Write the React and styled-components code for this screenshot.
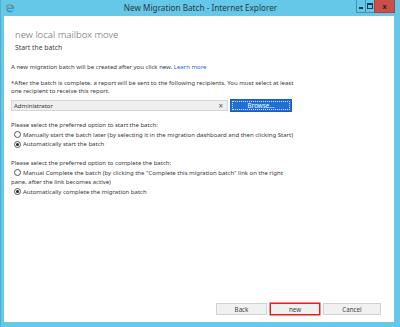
import styled, { createGlobalStyle } from 'styled-components';

const GlobalStyle = createGlobalStyle`
  html, body {
    margin: 0;
    padding: 0;
    overflow: hidden;
  }
  body {
    font-family: 'Noto Sans', 'Open Sans', sans-serif;
  }
`;

const Frame = styled.div`
  width: 400px;
  height: 327px;
  box-sizing: border-box;
  background: #65c8e8;
  border-left: 1px solid #4eafd6;
  display: flex;
  flex-direction: column;
`;

const TitleBar = styled.div`
  height: 16px;
  display: flex;
  align-items: flex-start;
  position: relative;
`;

const AppIcon = styled.svg`
  margin: 3px 0 0 4px;
  width: 10px;
  height: 10px;
`;

const TitleText = styled.div`
  position: absolute;
  left: 0;
  right: 0;
  top: 2px;
  text-align: center;
  font-size: 8.2px;
  line-height: 11px;
  color: #2b3a44;
  pointer-events: none;
`;

const Controls = styled.div`
  margin-left: auto;
  margin-right: 5px;
  display: flex;
  height: 13px;
`;

const CtrlButton = styled.div`
  width: ${({ wide }) => (wide ? '21px' : '10px')};
  height: 13px;
  box-sizing: border-box;
  border: 1px solid ${({ close }) => (close ? '#a8433c' : '#3d93b8')};
  border-top: none;
  margin-left: -1px;
  background: ${({ close }) => (close ? '#c9504a' : '#65c8e8')};
  display: flex;
  align-items: center;
  justify-content: center;
  font-size: 7px;
  font-weight: bold;
  color: #222;
  line-height: 1;
`;

const MinGlyph = styled.span`
  width: 4px;
  height: 2px;
  background: #1f3b4a;
  margin-top: 3px;
`;

const MaxGlyph = styled.span`
  width: 4px;
  height: 3px;
  border: 1px solid #1f3b4a;
  border-top-width: 2px;
`;

const Client = styled.div`
  flex: 1;
  margin: 0 6px 5px 3px;
  background: #fff;
  display: flex;
  flex-direction: column;
  color: #3a3a3a;
`;

const Heading = styled.div`
  padding: 13px 0 0 11px;
  font-size: 9.6px;
  font-weight: 300;
  color: #707070;
  line-height: 12px;
`;

const SubHeading = styled.div`
  padding: 2px 0 0 11px;
  font-size: 6.8px;
  color: #444;
  line-height: 10px;
`;

const Body = styled.div`
  padding: 10px 0 0 7px;
  flex: 1;
  font-size: 6px;
  line-height: 8px;
`;

const Paragraph = styled.p`
  margin: 0 0 ${({ gap }) => gap || 0}px;
  max-width: 290px;
`;

const LearnMore = styled.span`
  color: #1d6bc8;
`;

const RecipientRow = styled.div`
  display: flex;
  align-items: center;
  margin: 4px 0 9px;
`;

const RecipientInput = styled.div`
  width: 217px;
  height: 11px;
  box-sizing: border-box;
  background: #efefef;
  border: 1px solid #d6d6d6;
  display: flex;
  align-items: center;
  padding: 0 4px 0 2px;
  font-size: 6px;
  color: #333;
`;

const ClearX = styled.span`
  margin-left: auto;
  font-size: 8px;
  color: #555;
`;

const BrowseButton = styled.div`
  margin-left: 2px;
  width: 62px;
  height: 13px;
  box-sizing: border-box;
  background: #2070d4;
  border: 1px solid #1a5fb5;
  outline: 1px dotted #cfe2fb;
  outline-offset: -3px;
  color: #fff;
  font-size: 6.3px;
  display: flex;
  align-items: center;
  justify-content: center;
`;

const Section = styled.div`
  margin-bottom: ${({ gap }) => gap || 0}px;
`;

const Prompt = styled.div`
  margin-bottom: 1.5px;
`;

const RadioRow = styled.div`
  display: flex;
  align-items: flex-start;
  margin-top: 1.6px;
`;

const RadioDot = styled.span`
  flex: none;
  width: 7px;
  height: 7px;
  box-sizing: border-box;
  border-radius: 50%;
  border: 1px solid #555;
  margin: 0.5px 2px 0 3px;
  display: flex;
  align-items: center;
  justify-content: center;
  background: #fff;

  &::after {
    content: '';
    width: 3px;
    height: 3px;
    border-radius: 50%;
    background: ${({ checked }) => (checked ? '#222' : 'transparent')};
  }
`;

const RadioLabel = styled.span`
  max-width: 280px;
`;

const WrapLabel = styled.div`
  margin-top: 1.6px;
  max-width: 295px;
`;

const Footer = styled.div`
  display: flex;
  justify-content: flex-end;
  gap: 3px;
  padding: 0 13px 7px 0;
`;

const FooterButton = styled.div`
  width: ${({ w }) => w}px;
  height: 12px;
  box-sizing: border-box;
  background: #f1f1f1;
  border: 1px solid ${({ primary }) => (primary ? '#e0201c' : '#d2d2d2')};
  box-shadow: ${({ primary }) => (primary ? '0 0 0 0.5px #e0201c' : 'none')};
  font-size: 6.2px;
  color: #444;
  display: flex;
  align-items: center;
  justify-content: center;
`;

const IEIcon = () => (
  <AppIcon viewBox="0 0 20 20">
    <circle cx="10" cy="10.5" r="6.5" fill="none" stroke="#2f8fd8" strokeWidth="3" />
    <rect x="5" y="9.2" width="10" height="2.4" fill="#2f8fd8" />
    <rect x="12" y="12.3" width="6" height="3" fill="#65c8e8" />
    <path d="M2 15 C 0 8, 12 1, 19 3" fill="none" stroke="#f2b321" strokeWidth="1.6" />
  </AppIcon>
);

const App = () => (
  <>
    <GlobalStyle />
    <Frame>
      <TitleBar>
        <IEIcon />
        <TitleText>New Migration Batch - Internet Explorer</TitleText>
        <Controls>
          <CtrlButton><MinGlyph /></CtrlButton>
          <CtrlButton><MaxGlyph /></CtrlButton>
          <CtrlButton wide close>x</CtrlButton>
        </Controls>
      </TitleBar>
      <Client>
        <Heading>new local mailbox move</Heading>
        <SubHeading>Start the batch</SubHeading>
        <Body>
          <Paragraph gap={8}>
            A new migration batch will be created after you click new. <LearnMore>Learn more</LearnMore>
          </Paragraph>
          <Paragraph>
            *After the batch is complete, a report will be sent to the following recipients. You must select at least one recipient to receive this report.
          </Paragraph>
          <RecipientRow>
            <RecipientInput>
              Administrator
              <ClearX>×</ClearX>
            </RecipientInput>
            <BrowseButton>Browse...</BrowseButton>
          </RecipientRow>
          <Section gap={11}>
            <Prompt>Please select the preferred option to start the batch:</Prompt>
            <RadioRow>
              <RadioDot />
              <RadioLabel>Manually start the batch later (by selecting it in the migration dashboard and then clicking Start)</RadioLabel>
            </RadioRow>
            <RadioRow>
              <RadioDot checked />
              <RadioLabel>Automatically start the batch</RadioLabel>
            </RadioRow>
          </Section>
          <Section>
            <Prompt>Please select the preferred option to complete the batch:</Prompt>
            <RadioRow>
              <RadioDot />
              <RadioLabel>Manual Complete the batch (by clicking the "Complete this migration batch" link on the right</RadioLabel>
            </RadioRow>
            <WrapLabel>pane, after the link becomes active)</WrapLabel>
            <RadioRow>
              <RadioDot checked />
              <RadioLabel>Automatically complete the migration batch</RadioLabel>
            </RadioRow>
          </Section>
        </Body>
        <Footer>
          <FooterButton w={51}>Back</FooterButton>
          <FooterButton w={50} primary>new</FooterButton>
          <FooterButton w={58}>Cancel</FooterButton>
        </Footer>
      </Client>
    </Frame>
  </>
);

export default App;
